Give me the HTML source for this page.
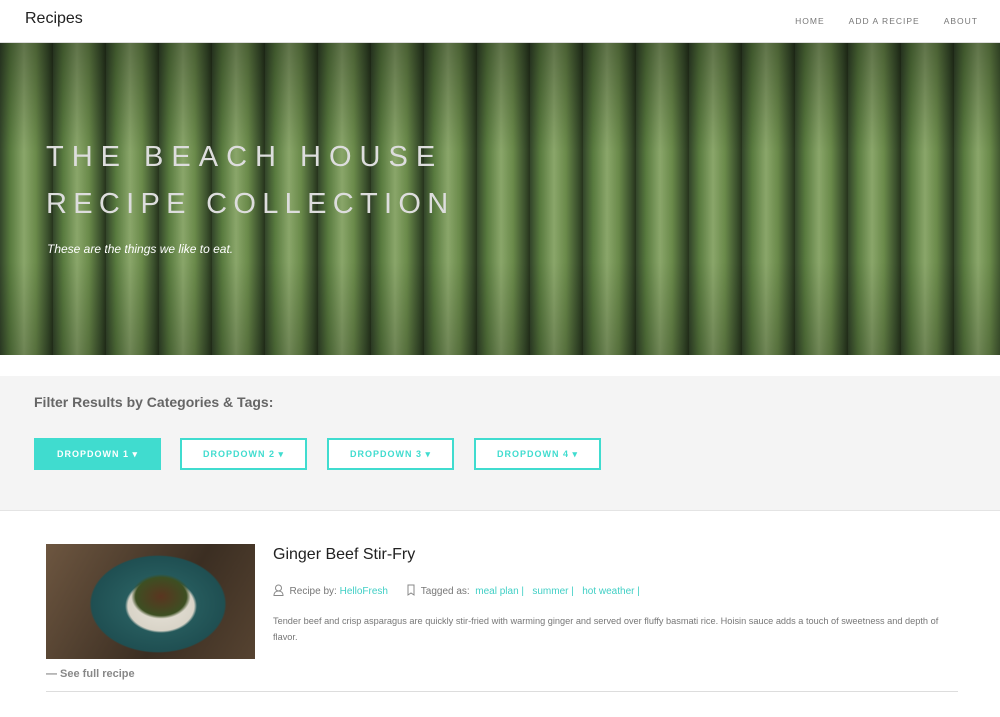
<!DOCTYPE html>
<html><head><meta charset="utf-8"><style>
*{margin:0;padding:0;box-sizing:border-box}
body{width:1000px;height:717px;overflow:hidden;background:#fff;font-family:"Liberation Sans",sans-serif}
.nav{height:43px;border-bottom:1px solid #ddd;position:relative}
.brand{position:absolute;left:25px;top:10px;font-size:16px;color:#222}
.links{position:absolute;right:22px;top:16px;font-size:8.5px;letter-spacing:1px;color:#777}
.links span{margin-left:24px}
.hero{position:absolute;top:43px;left:0;width:1000px;height:312px;overflow:hidden;
background:
linear-gradient(180deg,rgba(0,0,0,.3),rgba(0,0,0,0) 35%,rgba(0,0,0,0) 70%,rgba(0,0,0,.2)),
repeating-linear-gradient(90deg,#33452a 0px,#587a3e 10px,#8aa66a 24px,#6a8a4a 36px,#3a4f2c 48px,#26331c 53px),
#4a6332}
.hero .t{position:absolute;left:46px;color:#ddd;font-size:29px;letter-spacing:8px;font-weight:normal}
.hero .s{position:absolute;left:47px;top:199px;color:#fff;font-style:italic;font-size:12px}
.filter{position:absolute;top:376px;left:0;width:1000px;height:135px;background:#f4f4f4;border-bottom:1px solid #e4e4e4}
.filter h3{position:absolute;left:34px;top:18px;font-size:14px;color:#666;font-weight:bold}
.btn{position:absolute;top:62px;width:127px;height:32px;border:2px solid #40dccf;background:#fff;color:#40dccf;font-size:9px;font-weight:bold;letter-spacing:1px;text-align:center;line-height:28px}
.btn.a{background:#40dccf;color:#fff}
.img{position:absolute;left:46px;top:544px;width:209px;height:115px;overflow:hidden;
background:radial-gradient(ellipse 60px 45px at 115px 62px,#e6e2d8 0,#d9d4c8 55%,transparent 60%),
radial-gradient(ellipse 95px 68px at 112px 60px,#2f6a6a 0,#1f4f52 70%,transparent 72%),
linear-gradient(120deg,#6d5640,#3b2e22 60%,#564331)}
.meat{position:absolute;left:85px;top:30px;width:60px;height:45px;border-radius:50%;background:radial-gradient(#5a3520,#3d4f22 60%,transparent 70%)}
.title{position:absolute;left:273px;top:546px;font-size:16px;color:#222}
.meta{position:absolute;left:273px;top:584px;font-size:10px;color:#777}
.meta a{color:#40cfc5;text-decoration:none}
.desc{position:absolute;left:273px;top:613px;width:678px;font-size:9.2px;line-height:16px;color:#777}
.see{position:absolute;left:46px;top:668px;font-size:11px;color:#888;font-weight:bold}
.hr{position:absolute;left:46px;top:691px;width:912px;height:1px;background:#ddd}
</style></head><body>
<div class="nav"><div class="brand">Recipes</div><div class="links"><span>HOME</span><span>ADD A RECIPE</span><span>ABOUT</span></div></div>
<div class="hero">
<div class="t" style="top:98px">THE BEACH HOUSE</div>
<div class="t" style="top:145px;letter-spacing:6.3px">RECIPE COLLECTION</div>
<div class="s">These are the things we like to eat.</div>
</div>
<div class="filter"><h3>Filter Results by Categories &amp; Tags:</h3>
<div class="btn a" style="left:34px">DROPDOWN 1 ▾</div>
<div class="btn" style="left:180px">DROPDOWN 2 ▾</div>
<div class="btn" style="left:327px">DROPDOWN 3 ▾</div>
<div class="btn" style="left:474px">DROPDOWN 4 ▾</div>
</div>
<div class="img"><div class="meat"></div></div>
<div class="title">Ginger Beef Stir-Fry</div>
<div class="meta"><svg width="11" height="12" viewBox="0 0 11 12" style="vertical-align:-2px"><circle cx="5.5" cy="4" r="3" fill="none" stroke="#888"/><path d="M1 11.5c0-3 2-4.5 4.5-4.5s4.5 1.5 4.5 4.5z" fill="none" stroke="#888"/></svg>&nbsp; Recipe by: <a>HelloFresh</a> &nbsp; &nbsp; &nbsp; <svg width="8" height="12" viewBox="0 0 8 12" style="vertical-align:-2px"><path d="M1 1h6v10l-3-2-3 2z" fill="none" stroke="#888"/></svg>&nbsp; Tagged as: &nbsp;<a>meal plan |</a> &nbsp; <a>summer |</a> &nbsp; <a>hot weather |</a></div>
<div class="desc">Tender beef and crisp asparagus are quickly stir-fried with warming ginger and served over fluffy basmati rice. Hoisin sauce adds a touch of sweetness and depth of flavor.</div>
<div class="see">— See full recipe</div>
<div class="hr"></div>
</body></html>
